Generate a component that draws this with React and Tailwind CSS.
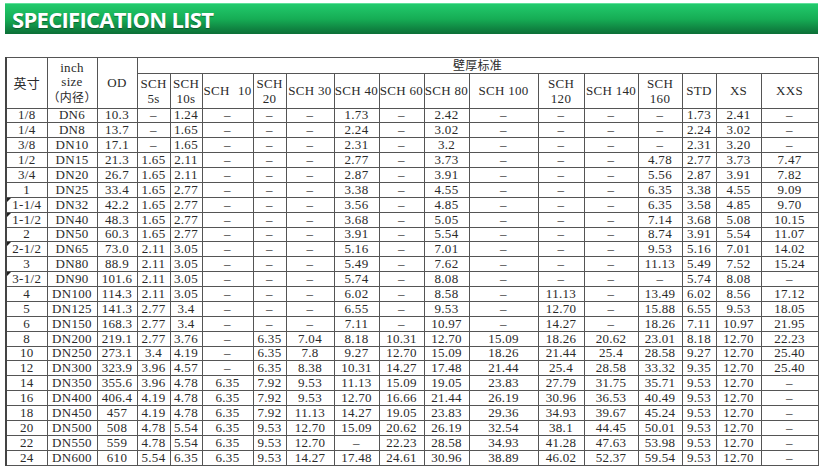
import React from 'react';

const colWidths = ['w-[41px]', 'w-[50px]', 'w-[40px]', 'w-[33px]', 'w-[32px]', 'w-[51px]', 'w-[33px]', 'w-[48px]', 'w-[45px]', 'w-[45px]', 'w-[45px]', 'w-[69px]', 'w-[46px]', 'w-[54px]', 'w-[44px]', 'w-[34px]', 'w-[45px]', 'w-[57px]'];

const D = '–';

// inch, DN, OD, 5s, 10s, 10, 20, 30, 40, 60, 80, 100, 120, 140, 160, STD, XS, XXS
const rows = [
  ['1/8', 'DN6', '10.3', D, '1.24', D, D, D, '1.73', D, '2.42', D, D, D, D, '1.73', '2.41', D],
  ['1/4', 'DN8', '13.7', D, '1.65', D, D, D, '2.24', D, '3.02', D, D, D, D, '2.24', '3.02', D],
  ['3/8', 'DN10', '17.1', D, '1.65', D, D, D, '2.31', D, '3.2', D, D, D, D, '2.31', '3.20', D],
  ['1/2', 'DN15', '21.3', '1.65', '2.11', D, D, D, '2.77', D, '3.73', D, D, D, '4.78', '2.77', '3.73', '7.47'],
  ['3/4', 'DN20', '26.7', '1.65', '2.11', D, D, D, '2.87', D, '3.91', D, D, D, '5.56', '2.87', '3.91', '7.82'],
  ['1', 'DN25', '33.4', '1.65', '2.77', D, D, D, '3.38', D, '4.55', D, D, D, '6.35', '3.38', '4.55', '9.09'],
  ['1-1/4', 'DN32', '42.2', '1.65', '2.77', D, D, D, '3.56', D, '4.85', D, D, D, '6.35', '3.58', '4.85', '9.70'],
  ['1-1/2', 'DN40', '48.3', '1.65', '2.77', D, D, D, '3.68', D, '5.05', D, D, D, '7.14', '3.68', '5.08', '10.15'],
  ['2', 'DN50', '60.3', '1.65', '2.77', D, D, D, '3.91', D, '5.54', D, D, D, '8.74', '3.91', '5.54', '11.07'],
  ['2-1/2', 'DN65', '73.0', '2.11', '3.05', D, D, D, '5.16', D, '7.01', D, D, D, '9.53', '5.16', '7.01', '14.02'],
  ['3', 'DN80', '88.9', '2.11', '3.05', D, D, D, '5.49', D, '7.62', D, D, D, '11.13', '5.49', '7.52', '15.24'],
  ['3-1/2', 'DN90', '101.6', '2.11', '3.05', D, D, D, '5.74', D, '8.08', D, D, D, D, '5.74', '8.08', D],
  ['4', 'DN100', '114.3', '2.11', '3.05', D, D, D, '6.02', D, '8.58', D, '11.13', D, '13.49', '6.02', '8.56', '17.12'],
  ['5', 'DN125', '141.3', '2.77', '3.4', D, D, D, '6.55', D, '9.53', D, '12.70', D, '15.88', '6.55', '9.53', '18.05'],
  ['6', 'DN150', '168.3', '2.77', '3.4', D, D, D, '7.11', D, '10.97', D, '14.27', D, '18.26', '7.11', '10.97', '21.95'],
  ['8', 'DN200', '219.1', '2.77', '3.76', D, '6.35', '7.04', '8.18', '10.31', '12.70', '15.09', '18.26', '20.62', '23.01', '8.18', '12.70', '22.23'],
  ['10', 'DN250', '273.1', '3.4', '4.19', D, '6.35', '7.8', '9.27', '12.70', '15.09', '18.26', '21.44', '25.4', '28.58', '9.27', '12.70', '25.40'],
  ['12', 'DN300', '323.9', '3.96', '4.57', D, '6.35', '8.38', '10.31', '14.27', '17.48', '21.44', '25.4', '28.58', '33.32', '9.35', '12.70', '25.40'],
  ['14', 'DN350', '355.6', '3.96', '4.78', '6.35', '7.92', '9.53', '11.13', '15.09', '19.05', '23.83', '27.79', '31.75', '35.71', '9.53', '12.70', D],
  ['16', 'DN400', '406.4', '4.19', '4.78', '6.35', '7.92', '9.53', '12.70', '16.66', '21.44', '26.19', '30.96', '36.53', '40.49', '9.53', '12.70', D],
  ['18', 'DN450', '457', '4.19', '4.78', '6.35', '7.92', '11.13', '14.27', '19.05', '23.83', '29.36', '34.93', '39.67', '45.24', '9.53', '12.70', D],
  ['20', 'DN500', '508', '4.78', '5.54', '6.35', '9.53', '12.70', '15.09', '20.62', '26.19', '32.54', '38.1', '44.45', '50.01', '9.53', '12.70', D],
  ['22', 'DN550', '559', '4.78', '5.54', '6.35', '9.53', '12.70', D, '22.23', '28.58', '34.93', '41.28', '47.63', '53.98', '9.53', '12.70', D],
  ['24', 'DN600', '610', '5.54', '6.35', '6.35', '9.53', '14.27', '17.48', '24.61', '30.96', '38.89', '46.02', '52.37', '59.54', '9.53', '12.70', D],
];

// rows that carry the little excel marker in the first cell
const marked = ['1-1/4', '1-1/2', '2-1/2', '3-1/2'];

const cell = 'border border-[#555] p-0 text-center align-middle font-normal';

export default function App() {
  return (
    <div className="w-[823px] h-[471px] bg-white overflow-hidden pt-[3px] font-['Liberation_Serif','Noto_Sans_CJK_SC',serif] text-[#2a2a2a]">
      {/* title bar */}
      <div className="mx-[5px] h-[31px] border-t border-[#5fe09a] bg-gradient-to-b from-[#22ca6c] via-[#16ad55] to-[#0c6f37] flex items-center pl-[7px]">
        <h1 className="font-['Open_Sans',sans-serif] font-bold text-[22px] leading-none tracking-[-0.7px] text-white [text-shadow:0_1px_1px_rgba(0,0,0,0.35)]">
          SPECIFICATION LIST
        </h1>
      </div>

      <table className="mt-[23px] ml-[5px] w-[812px] table-fixed border-collapse border-l-2 border-l-[#444] text-[13px] tracking-[0.3px]">
        <colgroup>
          {colWidths.map((w, i) => <col key={i} className={w} />)}
        </colgroup>
        <thead>
          <tr className="h-[15.5px]">
            <th rowSpan={2} className={`${cell} text-[13px] font-['Noto_Sans_CJK_SC',sans-serif]`}>英寸</th>
            <th rowSpan={2} className={`${cell} leading-[14.5px]`}>
              inch<br />size<br /><span className="font-['Noto_Sans_CJK_SC',sans-serif] text-[12px]">（内径）</span>
            </th>
            <th rowSpan={2} className={cell}>OD</th>
            <th colSpan={15} className={`${cell} leading-[14px] text-[12px] font-['Noto_Sans_CJK_SC',sans-serif]`}>壁厚标准</th>
          </tr>
          <tr className="h-[35px] leading-[15px]">
            <th className={cell}>SCH<br />5s</th>
            <th className={cell}>SCH<br />10s</th>
            <th className={cell}>
              <div className="flex justify-between px-[1px]"><span>SCH</span><span>10</span></div>
            </th>
            <th className={cell}>SCH<br />20</th>
            <th className={cell}>SCH 30</th>
            <th className={cell}>SCH 40</th>
            <th className={cell}>SCH 60</th>
            <th className={cell}>SCH 80</th>
            <th className={cell}>SCH 100</th>
            <th className={cell}>SCH<br />120</th>
            <th className={cell}>SCH 140</th>
            <th className={cell}>SCH<br />160</th>
            <th className={cell}>STD</th>
            <th className={cell}>XS</th>
            <th className={cell}>XXS</th>
          </tr>
        </thead>
        <tbody>
          {rows.map((r) => (
            <tr key={r[0]} className="h-[14.88px] leading-[12px]">
              {r.map((v, j) => (
                <td key={j} className={`${cell} ${j === 0 ? 'relative' : ''}`}>
                  {j === 0 && marked.includes(v) && (
                    <span className="absolute top-0 left-0 w-0 h-0 border-t-[4px] border-r-[4px] border-t-[#222] border-r-transparent" />
                  )}
                  {v}
                </td>
              ))}
            </tr>
          ))}
        </tbody>
      </table>
    </div>
  );
}
